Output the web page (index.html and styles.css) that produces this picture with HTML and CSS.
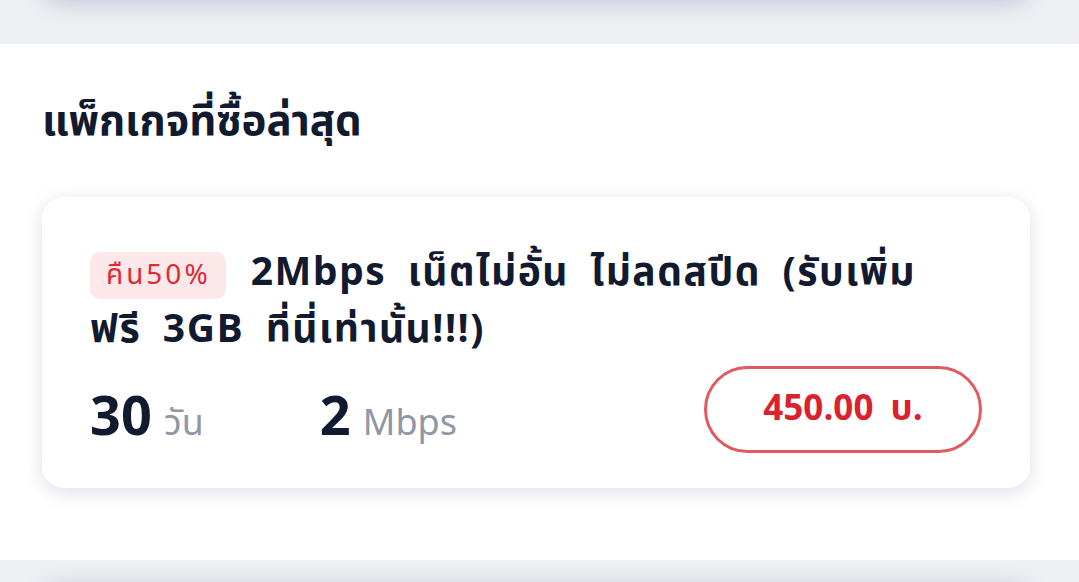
FILE: index.html
```html
<!DOCTYPE html>
<html>

<head>
    <title>แพ็กเกจที่ซื้อล่าสุด</title>
    <meta charset=utf-8>
    <meta name=viewport content="width=device-width, initial-scale=1">
    <link rel="stylesheet" href="styles.css">
</head>

<body>
    <div class="strip top-strip">
        <div class="ghost-card prev"></div>
    </div>

    <div class="section">
        <h1 class="heading">แพ็กเกจที่ซื้อล่าสุด</h1>

        <div class="card">
            <div class="title"><span class="badge">คืน50%</span><span class="name">2Mbps เน็ตไม่อั้น ไม่ลดสปีด (รับเพิ่ม ฟรี 3GB ที่นี่เท่านั้น!!!)</span></div>
            <div class="bottom">
                <div class="stats">
                    <div class="stat"><b>30</b> <span>วัน</span></div>
                    <div class="stat"><b>2</b> <span>Mbps</span></div>
                </div>
                <button class="price">450.00 บ.</button>
            </div>
        </div>
    </div>

    <div class="strip bottom-strip">
        <div class="ghost-card next"></div>
    </div>
</body>

</html>
```

FILE: styles.css
```css
body {
    margin: 0;
    font-family: "Noto Sans Thai", "Noto Sans", sans-serif;
    background: #eeeff3;
    color: #111a2e;
}

.strip {
    background: #eeeff3;
    padding: 0 49px 0 42px;
    overflow: hidden;
}

.top-strip {
    height: 44px;
}

.bottom-strip {
    height: 22px;
}

.ghost-card {
    background: #fff;
    border-radius: 22px;
    height: 40px;
    box-shadow: 0 4px 20px rgba(120, 128, 170, 0.35);
}

.prev {
    margin-top: -40px;
}

.next {
    margin-top: 22px;
}

.section {
    background: #fff;
    padding: 1px 49px 72px 42px;
}

.heading {
    margin: 0;
    margin-top: 49px;
    font-size: 42px;
    font-weight: 700;
    line-height: 56px;
}

.card {
    margin-top: 47px;
    background: #fff;
    border-radius: 22px;
    padding: 48px 48px 35px 48px;
    box-shadow: 0 4px 18px rgba(120, 128, 170, 0.25);
}

.title {
    font-size: 39px;
    font-weight: 700;
    line-height: 57px;
    letter-spacing: 1.5px;
    word-spacing: 10px;
}

.badge {
    display: inline-block;
    background: #fde8e9;
    color: #dc2b36;
    font-size: 28px;
    font-weight: 400;
    line-height: 47px;
    padding: 0 15px 0 16px;
    border-radius: 10px;
    margin-right: 25px;
    vertical-align: 1px;
    word-spacing: 0;
    letter-spacing: 3px;
}

.bottom {
    display: flex;
    align-items: flex-start;
    justify-content: space-between;
    margin-top: 7px;
}

.stats {
    display: flex;
    gap: 116px;
    margin-top: 16px;
    height: 71px;
    line-height: 74px;
}

.stat b {
    font-size: 54px;
    font-weight: 700;
}

.stat span {
    font-size: 36px;
    color: #9096a4;
    margin-left: 8px;
}

.price {
    width: 278px;
    height: 87px;
    border: 3px solid #e05a5f;
    border-radius: 44px;
    background: #fff;
    color: #d9222e;
    font-family: inherit;
    font-size: 35px;
    font-weight: 700;
    word-spacing: 8px;
}
```
